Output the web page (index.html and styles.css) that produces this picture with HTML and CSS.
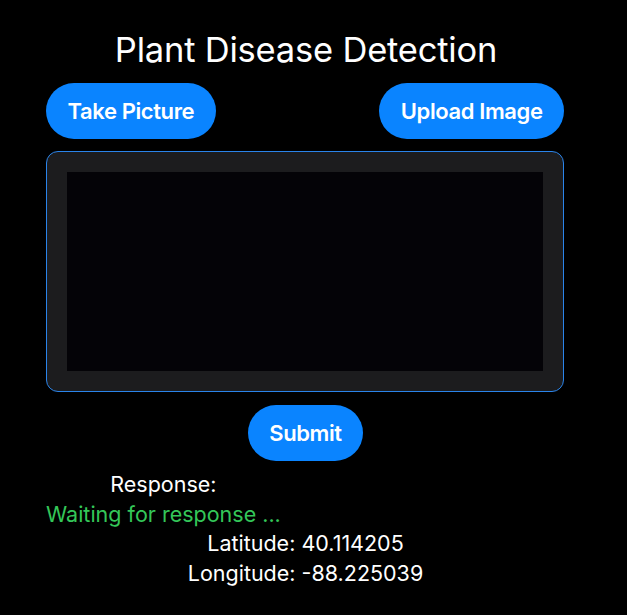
FILE: index.html
```html
<!DOCTYPE html>
<html>
<head>
<meta charset="utf-8">
<link rel="stylesheet" href="styles.css">
</head>
<body>
<main class="screen">
  <h1 class="title">Plant Disease Detection</h1>
  <div class="actions">
    <button class="pill">Take Picture</button>
    <button class="pill">Upload Image</button>
  </div>
  <div class="preview">
    <div class="preview-inner"></div>
  </div>
  <div class="submit-row">
    <button class="pill submit">Submit</button>
  </div>
  <div class="response">
    <div class="response-head">
      <div class="label">Response:</div>
      <div class="waiting">Waiting for response ...</div>
    </div>
    <div class="coords">
      <div>Latitude: 40.114205</div>
      <div>Longitude: -88.225039</div>
    </div>
  </div>
</main>
</body>
</html>
```

FILE: styles.css
```css
html, body {
  margin: 0;
  padding: 0;
  background: #000;
  height: 100%;
}
body {
  font-family: Inter, "Noto Sans", sans-serif;
  color: #fff;
}
.screen {
  width: 518px;
  margin-left: 46px;
  padding-top: 29px;
  display: flex;
  flex-direction: column;
}
.title {
  margin: 0;
  font-size: 34.5px;
  font-weight: 400;
  text-align: center;
  line-height: 42px;
  height: 44px;
  letter-spacing: -0.2px;
  padding-left: 2px;
}
.actions {
  display: flex;
  justify-content: space-between;
  margin-top: 10px;
}
.pill {
  background: #0a84ff;
  color: #fff;
  border: none;
  border-radius: 28px;
  height: 56px;
  padding: 0 21.5px;
  font-family: Inter, "Noto Sans", sans-serif;
  font-size: 22px;
  font-weight: 600;
  letter-spacing: -0.4px;
}
.preview {
  margin-top: 12px;
  height: 241px;
  box-sizing: border-box;
  border: 1.5px solid #2a84ea;
  border-radius: 12px;
  background: #1c1c1e;
  padding: 20px 20px;
  display: flex;
}
.preview-inner {
  flex: 1;
  background: #040307;
}
.submit-row {
  display: flex;
  justify-content: center;
  margin-top: 13px;
}
.submit {
  width: 115px;
  padding: 0;
  margin-left: 1px;
}
.response {
  margin-top: 9px;
  font-size: 21.5px;
  line-height: 29.5px;
}
.response-head {
  display: inline-flex;
  flex-direction: column;
  align-items: center;
  align-self: flex-start;
}
.waiting {
  color: #34c759;
}
.coords {
  text-align: center;
  margin-left: 1px;
}
```
